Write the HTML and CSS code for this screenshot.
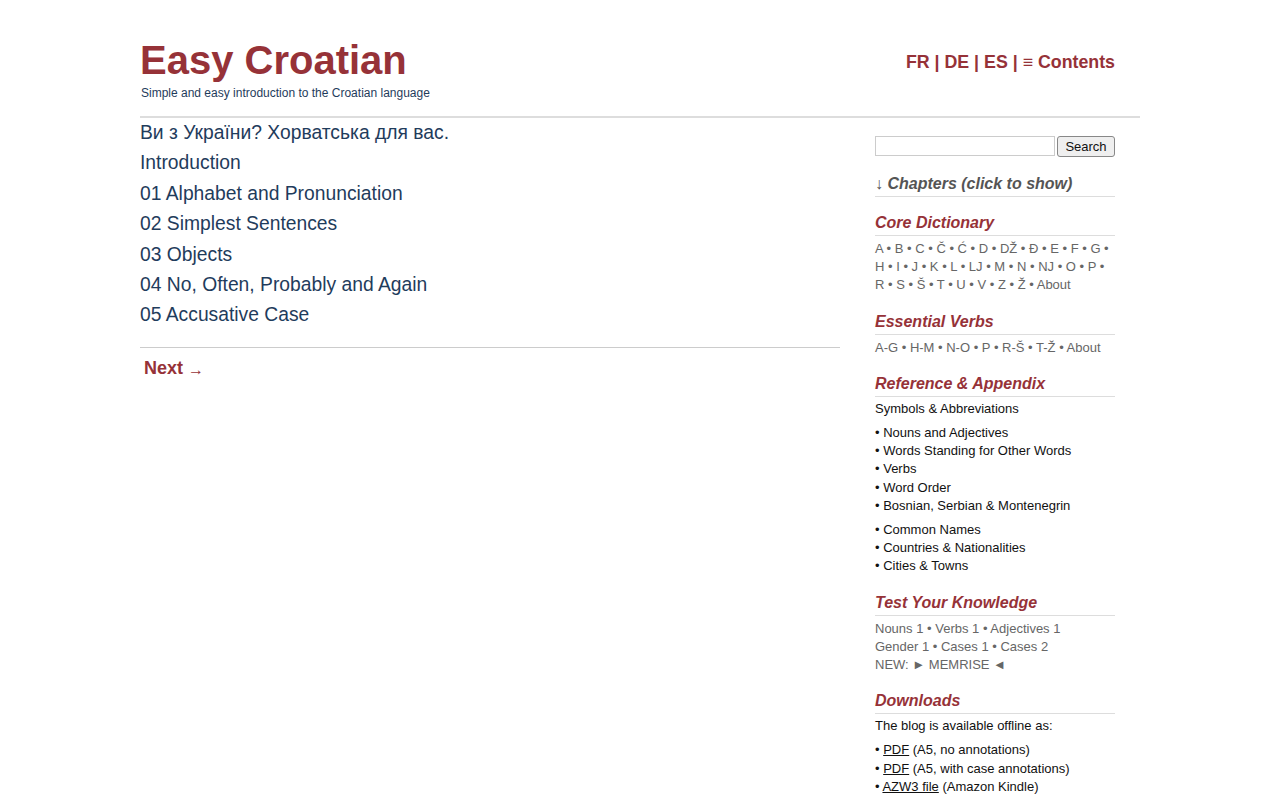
FILE: index.html
```html
<!DOCTYPE html>
<html lang="en">
<head>
  <meta charset="UTF-8" />
  <meta name="viewport" content="width=device-width, initial-scale=1.0"/>
  <title>Easy Croatian</title>

  <link rel="stylesheet" href="styles.css">
</head>
<body>

  <div class="page">

    <!-- Header -->
    <div class="header">
      <div class="brand">
        <h1 class="site-title">Easy Croatian</h1>
        <div class="tagline">Simple and easy introduction to the Croatian language</div>
      </div>
      <div class="lang-nav">
        <a href="#">FR</a> | <a href="#">DE</a> | <a href="#">ES</a> | <a href="#">&equiv; Contents</a>
      </div>
    </div>

    <div class="columns">

      <!-- Main column -->
      <div class="main">
        <ul class="chapter-list">
          <li><a href="#">Ви з України? Хорватська для вас.</a></li>
          <li><a href="#">Introduction</a></li>
          <li><a href="#">01 Alphabet and Pronunciation</a></li>
          <li><a href="#">02 Simplest Sentences</a></li>
          <li><a href="#">03 Objects</a></li>
          <li><a href="#">04 No, Often, Probably and Again</a></li>
          <li><a href="#">05 Accusative Case</a></li>
        </ul>

        <div class="pager">
          <a href="#">Next <span class="arrow">&rarr;</span></a>
        </div>
      </div>

      <!-- Sidebar -->
      <div class="sidebar">
        <form class="search">
          <input type="text" />
          <button type="button">Search</button>
        </form>

        <div class="widget chapters">
          <h3 class="toggle">&darr; Chapters (click to show)</h3>
        </div>

        <div class="widget">
          <h3>Core Dictionary</h3>
          <p class="links">
            <a href="#">A</a> • <a href="#">B</a> • <a href="#">C</a> • <a href="#">Č</a> • <a href="#">Ć</a> • <a href="#">D</a> • <a href="#">DŽ</a> • <a href="#">Đ</a> • <a href="#">E</a> • <a href="#">F</a> • <a href="#">G</a> •
            <a href="#">H</a> • <a href="#">I</a> • <a href="#">J</a> • <a href="#">K</a> • <a href="#">L</a> • <a href="#">LJ</a> • <a href="#">M</a> • <a href="#">N</a> • <a href="#">NJ</a> • <a href="#">O</a> • <a href="#">P</a> •
            <a href="#">R</a> • <a href="#">S</a> • <a href="#">Š</a> • <a href="#">T</a> • <a href="#">U</a> • <a href="#">V</a> • <a href="#">Z</a> • <a href="#">Ž</a> • <a href="#">About</a>
          </p>
        </div>

        <div class="widget">
          <h3>Essential Verbs</h3>
          <p class="links">
            <a href="#">A-G</a> • <a href="#">H-M</a> • <a href="#">N-O</a> • <a href="#">P</a> • <a href="#">R-Š</a> • <a href="#">T-Ž</a> • <a href="#">About</a>
          </p>
        </div>

        <div class="widget">
          <h3>Reference &amp; Appendix</h3>
          <p class="text"><a href="#">Symbols &amp; Abbreviations</a></p>
          <p class="text">
            • <a href="#">Nouns and Adjectives</a><br>
            • <a href="#">Words Standing for Other Words</a><br>
            • <a href="#">Verbs</a><br>
            • <a href="#">Word Order</a><br>
            • <a href="#">Bosnian, Serbian &amp; Montenegrin</a>
          </p>
          <p class="text">
            • <a href="#">Common Names</a><br>
            • <a href="#">Countries &amp; Nationalities</a><br>
            • <a href="#">Cities &amp; Towns</a>
          </p>
        </div>

        <div class="widget">
          <h3>Test Your Knowledge</h3>
          <p class="links">
            <a href="#">Nouns 1</a> • <a href="#">Verbs 1</a> • <a href="#">Adjectives 1</a><br>
            <a href="#">Gender 1</a> • <a href="#">Cases 1</a> • <a href="#">Cases 2</a><br>
            NEW: <a href="#">&#9658; MEMRISE &#9668;</a>
          </p>
        </div>

        <div class="widget">
          <h3>Downloads</h3>
          <p class="text">The blog is available offline as:</p>
          <p class="text">
            • <a class="u" href="#">PDF</a> (A5, no annotations)<br>
            • <a class="u" href="#">PDF</a> (A5, with case annotations)<br>
            • <a class="u" href="#">AZW3 file</a> (Amazon Kindle)
          </p>
        </div>
      </div>

    </div>
  </div>

</body>
</html>
```

FILE: styles.css
```css
body {
  margin: 0;
  padding: 0;
  font-family: "Liberation Sans", Arial, sans-serif;
  background: #fff;
  color: #222;
}

a {
  color: inherit;
  text-decoration: none;
}

.page {
  width: 1000px;
  margin: 0 auto;
}

/* Header */

.header {
  display: flex;
  justify-content: space-between;
  align-items: flex-start;
  padding: 36px 25px 0 0;
  height: 80px;
  border-bottom: 2px solid #ddd;
}

.site-title {
  margin: 0;
  font-size: 40px;
  line-height: 48px;
  font-weight: bold;
  color: #963238;
}

.tagline {
  margin: 1px 0 0 1px;
  font-size: 12px;
  line-height: 16px;
  color: #1f3c5c;
}

.lang-nav {
  margin-top: 16px;
  font-size: 17.8px;
  font-weight: bold;
  color: #963238;
}

/* Columns */

.columns {
  display: flex;
  align-items: flex-start;
}

.main {
  width: 700px;
}

.chapter-list {
  list-style: none;
  margin: 0;
  padding: 0 0 16px;
  border-bottom: 1px solid #ccc;
  font-size: 19.3px;
  line-height: 30.4px;
  color: #1f3c5c;
}

.pager {
  padding: 10px 4px;
  font-size: 18px;
  font-weight: bold;
  color: #963238;
}

.pager .arrow {
  font-size: 16px;
  font-weight: normal;
  position: relative;
  top: 1px;
}

/* Sidebar */

.sidebar {
  width: 240px;
  margin-left: 35px;
  padding-top: 18px;
}

.search {
  display: flex;
  gap: 2px;
  margin: 0 0 17px;
}

.search input {
  width: 180px;
  height: 20px;
  box-sizing: border-box;
  margin: 0;
  border: 1px solid #ccc;
  font-size: 13px;
}

.search button {
  width: 58px;
  height: 21px;
  padding: 0;
  margin: 0;
  border: 1px solid #888;
  border-radius: 3px;
  background: #efefef;
  font-family: "Liberation Sans", Arial, sans-serif;
  font-size: 13px;
  color: #111;
}

.widget {
  margin-bottom: 17px;
}

.widget.chapters {
  margin-bottom: 16px;
}

.widget h3 {
  margin: 0 0 4px;
  padding-bottom: 2px;
  border-bottom: 1px solid #ddd;
  font-size: 16px;
  line-height: 20px;
  font-style: italic;
  font-weight: bold;
  color: #963238;
}

.widget h3.toggle {
  color: #555;
  cursor: pointer;
}

.widget p {
  margin: 0;
  font-size: 13px;
  line-height: 18.2px;
}

.widget p + p {
  margin-top: 6px;
}

.widget h3 + p.text {
  margin-top: -1px;
}

.links {
  color: #666;
}

.text {
  color: #111;
}

.text a.u {
  text-decoration: underline;
}
```
